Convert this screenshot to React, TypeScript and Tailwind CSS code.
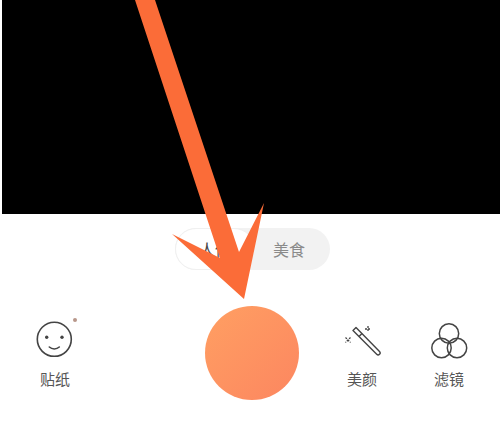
export default function App() {
  const font = { fontFamily: '"Noto Sans CJK SC", "Liberation Sans", sans-serif' };
  return (
    <div className="relative w-[500px] h-[434px] bg-white overflow-hidden" style={font}>
      <div className="ml-[2px] h-[214px] bg-black" />

      <div className="mt-[14px] ml-[175px] flex h-[42px] w-[155px] rounded-full bg-[#f2f2f2]">
        <div className="flex w-[80px] items-center justify-center rounded-full border border-[#f0f0f0] bg-white text-[16px] text-[#444]">
          人像
        </div>
        <div className="flex flex-1 items-center pl-[18px] text-[16px] text-[#8a8a8a]">美食</div>
      </div>

      <div className="mt-[36px] flex items-start">
        <div className="relative flex w-[110px] flex-col items-center pt-[15px]">
          <svg width="38" height="38" viewBox="0 0 38 38" fill="none" stroke="#444" strokeWidth="1.6">
            <circle cx="18.3" cy="18.3" r="17" />
            <circle cx="10.7" cy="16.3" r="1.7" fill="#444" stroke="none" />
            <circle cx="26" cy="16.3" r="1.7" fill="#444" stroke="none" />
            <path d="M13.3 26c2.8 2.6 7.2 2.6 10 0" strokeLinecap="round" />
          </svg>
          <span className="absolute left-[73px] top-[12px] h-[4px] w-[4px] rounded-full bg-[#b8978a]" />
          <span className="mt-[9px] text-[15px] leading-[22px] text-[#555]">贴纸</span>
        </div>

        <div className="ml-[95px] h-[94px] w-[94px] rounded-full bg-gradient-to-br from-[#ff9f62] to-[#fc8660]" />

        <div className="ml-[23px] flex w-[80px] flex-col items-center pt-[15px]">
          <svg width="38" height="38" viewBox="0 0 38 38" fill="none" stroke="#444" strokeWidth="1.4">
            <path d="M10 9.5l3-3 23.5 24a2 2 0 0 1 0 2.8 2 2 0 0 1-2.8 0z" strokeLinejoin="round" />
            <path d="M16 15.5l3-3" />
            <path d="M25 5v6M22 8h6" strokeWidth="1.3" strokeDasharray="2 1" />
            <path d="M2.5 16.5l5 5M7.5 16.5l-5 5" strokeWidth="1.3" strokeDasharray="2 1.2" />
          </svg>
          <span className="mt-[9px] text-[15px] leading-[22px] text-[#555]">美颜</span>
        </div>

        <div className="ml-[7px] flex w-[80px] flex-col items-center pt-[17px]">
          <svg width="38" height="36" viewBox="0 0 38 36" fill="none" stroke="#444" strokeWidth="1.5">
            <circle cx="19" cy="10.5" r="9.7" />
            <circle cx="11.5" cy="25" r="9.7" />
            <circle cx="27" cy="25" r="9.7" />
          </svg>
          <span className="mt-[9px] text-[15px] leading-[22px] text-[#555]">滤镜</span>
        </div>
      </div>

      <svg className="absolute left-0 top-0" width="500" height="434" viewBox="0 0 500 434">
        <path d="M135 0L155 0L239 252L264 203L244 299L172 234L220 258Z" fill="#fb6c38" />
      </svg>
    </div>
  );
}
